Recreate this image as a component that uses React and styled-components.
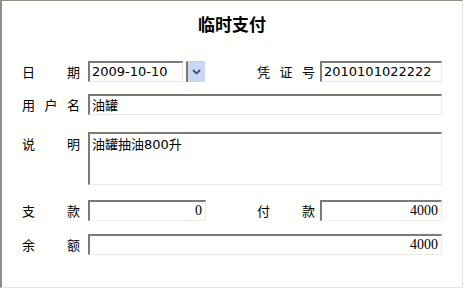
import React from 'react'
import styled, { createGlobalStyle } from 'styled-components'

const GlobalStyle = createGlobalStyle`
  html, body { margin: 0; padding: 0; background: #fff; }
  body { font-family: "Noto Sans CJK SC", "DejaVu Sans", sans-serif; }
`

const Window = styled.div`
  box-sizing: border-box;
  width: 463px;
  height: 288px;
  background: #fffffd;
  border-top: 1px solid #8f8f86;
  border-left: 2px solid #8f8f86;
  border-right: 1px solid #e6e6de;
  border-bottom: 1px solid #e6e6de;
  padding: 12px 0 0 20px;
`

const Title = styled.h1`
  margin: 0 0 26px;
  padding-right: 20px;
  text-align: center;
  font-size: 17px;
  font-weight: bold;
  line-height: 22px;
  color: #000;
`

const Form = styled.div`
  display: flex;
  flex-direction: column;
`

const Row = styled.div`
  display: flex;
  align-items: ${p => (p.top ? 'flex-start' : 'center')};
  margin-bottom: ${p => p.gap || 0}px;
`

const Label = styled.label`
  width: 58px;
  flex: none;
  display: flex;
  justify-content: space-between;
  font-size: 13px;
  line-height: 21px;
  color: #000;
  margin-right: ${p => p.space || 8}px;
  margin-top: ${p => p.offset || 0}px;
`

const Field = styled.div`
  box-sizing: border-box;
  width: ${p => p.w}px;
  height: ${p => p.h || 21}px;
  background: #fff;
  border-top: 2px solid #7c7c76;
  border-left: 2px solid #7c7c76;
  border-right: 1px solid #ecebe4;
  border-bottom: 1px solid #ecebe4;
  padding: ${p => (p.h ? '1px 2px' : '0 3px 0 2px')};
  font-family: ${p => (p.num ? '"Liberation Serif", serif' : '"DejaVu Sans", "Noto Sans CJK SC", sans-serif')};
  font-size: ${p => (p.num ? '14px' : '13px')};
  line-height: ${p => (p.h ? '18px' : '18px')};
  text-align: ${p => (p.num ? 'right' : 'left')};
  color: #000;
  white-space: nowrap;
  overflow: hidden;
`

const CjkText = styled.span`
  font-family: "Noto Sans CJK SC", sans-serif;
`

const DropButton = styled.div`
  box-sizing: border-box;
  width: 19px;
  height: 21px;
  margin-left: 3px;
  border-left: 2px solid #7c7c76;
  border-top: 1px solid #d0d0ca;
  background: #c9d6f4;
  display: flex;
  align-items: center;
  justify-content: center;
`

const Spacer = styled.div`
  width: ${p => p.w}px;
  flex: none;
`

const Chevron = () => (
  <svg width="9" height="6" viewBox="0 0 9 6">
    <path d="M1 1 L4.5 4.5 L8 1" fill="none" stroke="#3c5283" strokeWidth="1.8" />
  </svg>
)

function Spread({ chars }) {
  return chars.split('').map((c, i) => <span key={i}>{c}</span>)
}

export default function App() {
  return (
    <>
      <GlobalStyle />
      <Window>
        <Title>临时支付</Title>
        <Form>
          <Row gap={12}>
            <Label><Spread chars="日期" /></Label>
            <Field w={95}>2009-10-10</Field>
            <DropButton><Chevron /></DropButton>
            <Spacer w={52} />
            <Label space={5}><Spread chars="凭证号" /></Label>
            <Field w={122}>2010101022222</Field>
          </Row>
          <Row gap={17}>
            <Label><Spread chars="用户名" /></Label>
            <Field w={354}><CjkText>油罐</CjkText></Field>
          </Row>
          <Row top gap={15}>
            <Label offset={1}><Spread chars="说明" /></Label>
            <Field w={354} h={53}><CjkText>油罐抽油</CjkText>800<CjkText>升</CjkText></Field>
          </Row>
          <Row gap={13}>
            <Label><Spread chars="支款" /></Label>
            <Field w={118} num>0</Field>
            <Spacer w={51} />
            <Label space={5}><Spread chars="付款" /></Label>
            <Field w={122} num>4000</Field>
          </Row>
          <Row>
            <Label><Spread chars="余额" /></Label>
            <Field w={354} num>4000</Field>
          </Row>
        </Form>
      </Window>
    </>
  )
}
